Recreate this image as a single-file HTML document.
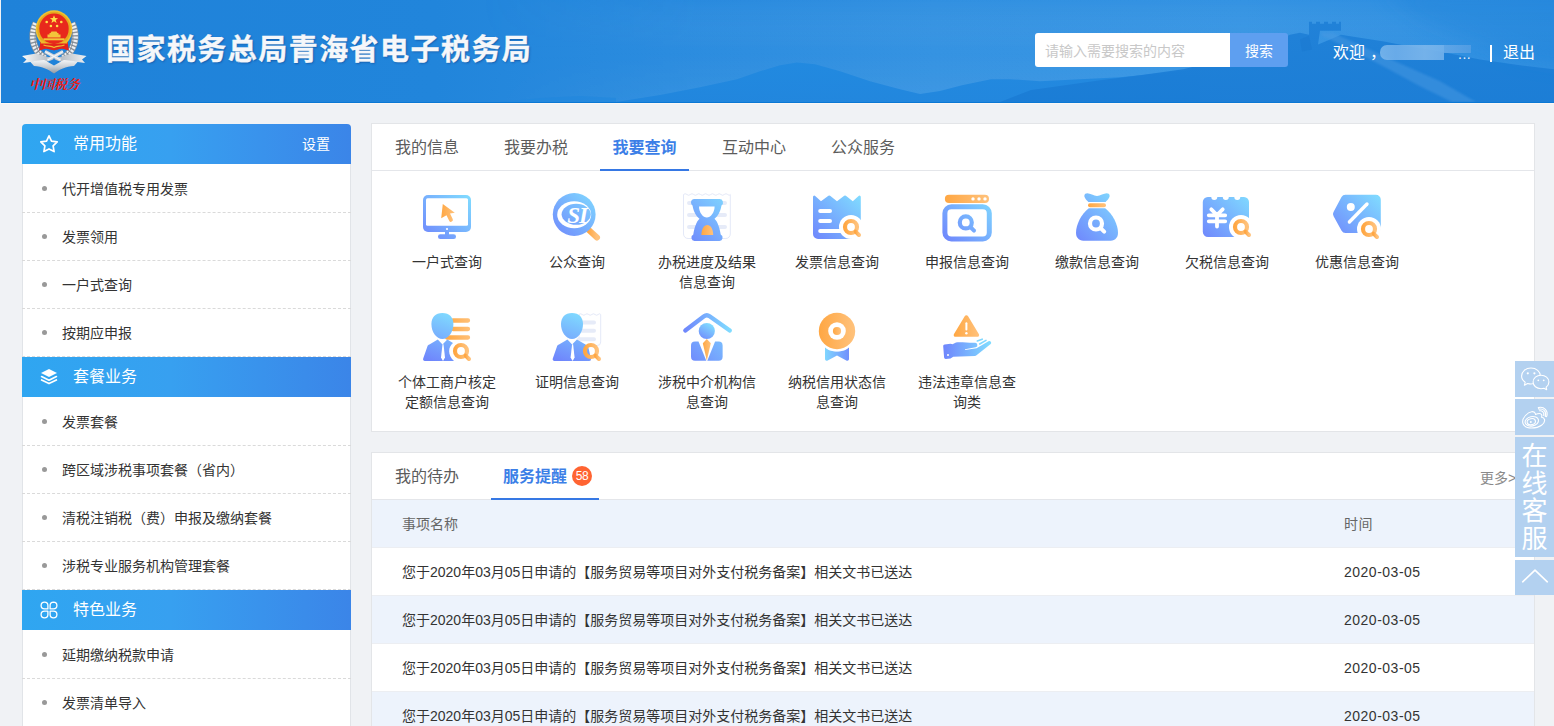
<!DOCTYPE html>
<html lang="zh-CN">
<head>
<meta charset="utf-8">
<title>国家税务总局青海省电子税务局</title>
<style>
*{box-sizing:border-box;margin:0;padding:0}
html,body{width:1554px;height:726px;overflow:hidden}
body{background:#f0f2f5;font-family:"Liberation Sans","Noto Sans CJK SC",sans-serif;color:#333;position:relative;font-size:14px}
ul{list-style:none}
/* header */
#hd{position:absolute;left:1px;top:0;width:1553px;height:103px;background:#1f82d9;overflow:hidden;border-bottom:1px solid #0b78d4}
#hd .bg{position:absolute;left:0;top:0;width:100%;height:100%}
#hdline{position:absolute;left:0;top:103px;width:1554px;height:1px;background:#fbf7f4}
#logo{position:absolute;left:18px;top:4px;width:74px;height:96px}
#title{position:absolute;left:106px;top:30px;height:40px;line-height:40px;font-size:29px;font-weight:bold;color:#f5f7fa;-webkit-text-stroke:.35px #f5f7fa;letter-spacing:1.45px;white-space:nowrap;text-shadow:1px 1px 2px rgba(0,40,110,.45)}
#search{position:absolute;left:1035px;top:33px;width:195px;height:34px;background:#fff;border-radius:3px 0 0 3px;color:#c8c8c8;font-size:14px;line-height:36px;padding-left:10px;overflow:hidden;white-space:nowrap}
#sbtn{position:absolute;left:1230px;top:33px;width:58px;height:34px;background:#5e9ff0;border-radius:0 3px 3px 0;color:#fff;font-size:14px;line-height:36px;overflow:hidden;text-align:center}
#welcome{position:absolute;left:1333px;top:41px;height:24px;line-height:24px;font-size:16px;color:#fff;white-space:nowrap}
#uname{position:absolute;left:1380px;top:45px;width:64px;height:15px;border-radius:7px 0 0 7px;background:linear-gradient(90deg,rgba(132,188,238,.8),rgba(112,175,234,.9) 25%,rgba(125,183,236,.9) 70%,rgba(120,180,236,.85));color:transparent;font-size:12px;overflow:hidden}
#uname2{position:absolute;left:1444px;top:45px;width:27px;height:8px;background:linear-gradient(90deg,rgba(110,172,232,.75),rgba(100,165,230,.6))}
#udots{position:absolute;left:1458px;top:42px;height:24px;line-height:24px;font-size:14px;letter-spacing:.5px;color:#e8f2fc;white-space:nowrap}
#sep{position:absolute;left:1490px;top:45px;width:2px;height:17px;background:#fff}
#logout{position:absolute;left:1503px;top:41px;height:24px;line-height:24px;font-size:16px;color:#fff;white-space:nowrap}
/* sidebar */
#side{position:absolute;left:22px;top:124px;width:329px;height:620px;background:#fff;box-shadow:inset 1px 0 #e1e4e8,inset -1px 0 #e1e4e8;border-radius:4px 4px 0 0;overflow:hidden}
.sh{position:relative;height:40px;background:linear-gradient(90deg,#2fa6f1 0%,#37a0f0 45%,#3b85e8 100%);color:#fff;font-size:16px;line-height:40px;padding-left:51px;white-space:nowrap}
.sh svg{position:absolute;left:16.500px;top:10px;width:20px;height:20px}
.sh .set{position:absolute;right:21px;top:0;font-size:14px}
#side ul{padding-top:1px}
#side li{position:relative;height:48px;line-height:49px;border-bottom:1px dashed #dadada;padding-left:40px;font-size:14px;color:#333;white-space:nowrap}
#side li:before{content:"";position:absolute;left:20px;top:21px;width:5px;height:5px;border-radius:50%;background:#999}
/* panels */
.panel{position:absolute;left:371px;width:1164px;background:#fff;border:1px solid #e3e5e8}
#p1{top:123px;height:309px}
#p2{top:452px;height:300px}
.tabs{position:relative;height:47px;border-bottom:1px solid #e4e6ea}
.tab{position:absolute;top:0;height:47px;line-height:47px;font-size:16px;color:#5c5c5c;white-space:nowrap;text-align:center}
.tab.on{color:#3c7fe7;font-weight:bold;border-bottom:2px solid #3678e4}
.ic{position:absolute;width:130px;text-align:center;font-size:14px;line-height:20px;color:#333}
.ic svg{display:block;margin:0 auto 7px;width:56px;height:56px}
.ic span{display:block;width:102px;margin:0 auto}
/* table */
.th{position:absolute;left:0;width:1162px;height:48px;line-height:49px;background:#edf3fc;font-size:14px;color:#666;border-bottom:1px solid #eceef2}
.tr{position:absolute;left:0;width:1162px;height:48px;line-height:49px;font-size:14px;color:#333;white-space:nowrap;border-bottom:1px solid #eceef2}
.tr.alt{background:#edf3fc}
.c1{position:absolute;left:30px;top:0}
.c2{position:absolute;left:972px;top:0;letter-spacing:.5px}
/* float */
.fl{position:absolute;left:1515px;width:39px;background:#b3d1f0;color:#fff;overflow:hidden}
.fl svg{display:block}
</style>
</head>
<body>
<div id="hd">
<svg class="bg" viewBox="1 0 1553 103" preserveAspectRatio="none">
<defs>
<linearGradient id="hg" gradientUnits="userSpaceOnUse" x1="0" y1="0" x2="1554" y2="0"><stop offset="0" stop-color="#1f82d9"/><stop offset=".28" stop-color="#2185db"/><stop offset=".43" stop-color="#2b8cdf"/><stop offset=".6" stop-color="#3593e2"/><stop offset=".8" stop-color="#3896e4"/><stop offset="1" stop-color="#2e8ee0"/></linearGradient>
<linearGradient id="hv" gradientUnits="userSpaceOnUse" x1="0" y1="0" x2="0" y2="103"><stop offset="0" stop-color="#0a6fd0" stop-opacity=".08"/><stop offset=".5" stop-color="#fff" stop-opacity="0"/><stop offset="1" stop-color="#fff" stop-opacity=".05"/></linearGradient>
<linearGradient id="hm" gradientUnits="userSpaceOnUse" x1="480" y1="0" x2="700" y2="0"><stop offset="0" stop-color="#fff" stop-opacity="0"/><stop offset="1" stop-color="#fff" stop-opacity="1"/></linearGradient>
<mask id="mk"><rect x="0" y="0" width="1554" height="103" fill="url(#hm)"/></mask>
<filter id="bl" x="-20%" y="-50%" width="140%" height="200%"><feGaussianBlur stdDeviation="9"/></filter><filter id="bl2"><feGaussianBlur stdDeviation="1.200"/></filter>
<linearGradient id="m1" gradientUnits="userSpaceOnUse" x1="0" y1="60" x2="0" y2="103"><stop offset="0" stop-color="#2089e0"/><stop offset="1" stop-color="#1f85dd"/></linearGradient>
<linearGradient id="m2" gradientUnits="userSpaceOnUse" x1="0" y1="20" x2="0" y2="103"><stop offset="0" stop-color="#1f80d7"/><stop offset="1" stop-color="#1a7cd5"/></linearGradient>
</defs>
<rect x="0" y="0" width="1554" height="103" fill="url(#hg)"/>
<rect x="0" y="0" width="1554" height="103" fill="url(#hv)" mask="url(#mk)"/>
<path d="M616 103 L660 96 L700 88 L737 80 L760 72 L780 66 L797 63 L815 65 L840 72 L870 82 L900 90 L920 95 L940 92 L962 86 L991 80 L1010 80 L1040 82 L1080 80 L1120 78 L1160 74 L1200 70 L1200 103 Z" fill="url(#m1)" opacity=".9"/>
<path d="M500 103 L540 99 L580 97 L616 99 L616 103 Z" fill="#2087de" opacity=".6"/>
<path d="M1000 103 L1031 91 L1065 86 L1100 81 L1140 76 L1183 70 L1215 62 L1250 52 L1275 42 L1290 35 L1300 33 L1309 35 L1309 22 L1312 22 L1312 24 L1316 24 L1316 22 L1320 22 L1320 24 L1324 24 L1324 22 L1328 22 L1328 24 L1332 24 L1332 22 L1336 22 L1336 24 L1339 24 L1339 22 L1341 22 L1341 31 L1320 31 L1318 45 L1330 40 L1341 35 L1360 38 L1384 42 L1410 47 L1440 52 L1480 60 L1520 66 L1554 70 L1554 103 Z" fill="url(#m2)" opacity=".92"/>
<path d="M1380 -10 L1574 -10 L1574 70 L1520 60 L1470 40 L1420 20 Z" fill="#1f82d9" opacity=".35" filter="url(#bl)"/>
<path d="M1322 33 L1332 33 L1352 42 L1400 64 L1440 82 L1476 103 L1452 103 L1420 87 L1385 68 L1345 47 L1322 36 Z" fill="#4a9ae2" opacity=".5" filter="url(#bl2)"/>
<path d="M1309 36 L1300 40 L1302 52 L1312 50 Z" fill="#1a78d0" opacity=".5"/>
</svg>
</div>
<div id="hdline"></div>
<svg id="logo" viewBox="18 4 74 96">
<defs>
<linearGradient id="sil" x1="0" y1="0" x2="0" y2="1"><stop offset="0" stop-color="#f4f6f8"/><stop offset=".5" stop-color="#c9ced4"/><stop offset="1" stop-color="#8f979f"/></linearGradient>
<linearGradient id="sil2" x1="0" y1="0" x2="1" y2="0"><stop offset="0" stop-color="#fafbfc"/><stop offset=".5" stop-color="#aab1b9"/><stop offset="1" stop-color="#eef0f2"/></linearGradient>
</defs>
<g fill="none" stroke-linecap="butt">
<path d="M45 58 C 34.500 52 29 38 36 23" stroke="#8b939b" stroke-width="7"/>
<path d="M63 58 C 73.500 52 79 38 72 23" stroke="#8b939b" stroke-width="7"/>
<path d="M45 58 C 34.500 52 29 38 36 23" stroke="#eef0f3" stroke-width="5.600" stroke-dasharray="2 1.400"/>
<path d="M63 58 C 73.500 52 79 38 72 23" stroke="#eef0f3" stroke-width="5.600" stroke-dasharray="2 1.400"/>
<path d="M42 55.500 C 36 50 33 40 36.500 29" stroke="#6f7780" stroke-width="1" opacity=".7"/>
<path d="M66 55.500 C 72 50 75 40 71.500 29" stroke="#6f7780" stroke-width="1" opacity=".7"/>
</g>
<path d="M22 56 L36 53.500 L50 57.500 L54 60 L58 57.500 L72 53.500 L86.500 56 L82 59.500 L85 63 L70 61 L58 65 L54 67 L50 65 L38 61 L23 63 L26.500 59.500 Z" fill="url(#sil2)"/>
<path d="M30 61.500 L44 60 L54 64.500 L64 60 L78 61.500 L74 66 C 66 66 59 70 54 73.500 C 49 70 42 66 34 66 Z" fill="url(#sil)"/>
<path d="M47 61.500 L54 59.500 L61 61.500 L54 65.500 Z" fill="#1f82d9"/>
<path d="M45 51.500 L60.500 60 M63 51.500 L47.500 60" stroke="#cfd4da" stroke-width="3.200" fill="none"/>
<path d="M45 51.500 L60.500 60 M63 51.500 L47.500 60" stroke="#f3f5f7" stroke-width="1.200" fill="none"/>
<path d="M40.300 41 H67.700 L68.600 50.300 L62 48.500 L54 50.300 L46 48.500 L39.400 50.300 Z" fill="#e3241b"/>
<ellipse cx="54" cy="29.300" rx="18.300" ry="19" fill="#f1c232"/>
<ellipse cx="54" cy="29.300" rx="16.800" ry="17.500" fill="#e6a91f"/>
<ellipse cx="54" cy="28.800" rx="14.700" ry="15.200" fill="#e8281c"/>
<path d="M41.500 40 C 46 43.500 51 42.500 54 44.500 C 57 42.500 62 43.500 66.500 40 L67.500 44.500 C 62 47 57 45.500 54 48 C 51 45.500 46 47 40.500 44.500 Z" fill="#efb92c"/>
<path d="M40.300 43.500 L67.700 43.500 L68.600 50.300 L62 48.200 L54 50.300 L46 48.200 L39.400 50.300 Z" fill="#e3241b"/>
<path d="M43.500 45 C 48 46.500 51 46 54 47.500 C 57 46 60 46.500 64.500 45" fill="none" stroke="#f0bd30" stroke-width="1.200"/>
<path d="M54 15.300 L55.100 18.100 L58.100 18.200 L55.700 20 L56.600 22.900 L54 21.200 L51.400 22.900 L52.300 20 L49.900 18.200 L52.900 18.100 Z" fill="#ffe14a"/>
<g fill="#ffe14a"><circle cx="46.700" cy="22" r="1.300"/><circle cx="50.900" cy="26" r="1.300"/><circle cx="57.100" cy="26" r="1.300"/><circle cx="61.300" cy="22" r="1.300"/></g>
<path d="M47.500 37.500 V34.500 H49.500 V33 H50.500 L51.500 31.500 H56.500 L57.500 33 H58.500 V34.500 H60.500 V37.500 Z" fill="#f3c53a"/>
<rect x="43.500" y="38.300" width="21" height="2" fill="#f3c53a"/>
<text x="54" y="89" text-anchor="middle" font-family="'Liberation Serif','Noto Serif CJK SC',serif" font-weight="700" font-style="italic" font-size="13" fill="#f2180e" letter-spacing="-0.600">中国税务</text>
</svg>
<div id="title">国家税务总局青海省电子税务局</div>
<div id="search">请输入需要搜索的内容</div>
<div id="sbtn">搜索</div>
<div id="welcome">欢迎<span style="margin-left:5px">，</span></div>
<div id="uname"></div><div id="uname2"></div>
<div id="udots">...</div>
<div id="sep"></div>
<div id="logout">退出</div>

<div id="side">
<div class="sh"><svg viewBox="0 0 20 20"><path d="M10 1.8l2.5 5.3 5.7.8-4.1 4 1 5.7-5.1-2.7-5.1 2.7 1-5.7-4.1-4 5.7-.8z" fill="none" stroke="#fff" stroke-width="1.7" stroke-linejoin="round"/></svg>常用功能<span class="set">设置</span></div>
<ul>
<li>代开增值税专用发票</li>
<li>发票领用</li>
<li>一户式查询</li>
<li>按期应申报</li>
</ul>
<div class="sh"><svg viewBox="0 0 20 20"><path d="M10 2l8 4-8 4-8-4z" fill="#fff"/><path d="M2.6 9.6L10 13.2l7.4-3.6M2.6 13L10 16.6 17.400 13" fill="none" stroke="#fff" stroke-width="1.7" stroke-linejoin="round" stroke-linecap="round"/></svg>套餐业务</div>
<ul>
<li>发票套餐</li>
<li>跨区域涉税事项套餐（省内）</li>
<li>清税注销税（费）申报及缴纳套餐</li>
<li>涉税专业服务机构管理套餐</li>
</ul>
<div class="sh"><svg viewBox="0 0 20 20"><g fill="none" stroke="#fff" stroke-width="1.300" stroke-linejoin="round"><path d="M5.500 2.100 A3.400 3.400 0 0 1 8.900 5.500 V8.900 H5.500 A3.400 3.400 0 0 1 5.500 2.100 Z"/><path d="M5.500 2.100 A3.400 3.400 0 0 1 8.900 5.500 V8.900 H5.500 A3.400 3.400 0 0 1 5.500 2.100 Z" transform="translate(20 0) scale(-1 1)"/><path d="M5.500 2.100 A3.400 3.400 0 0 1 8.900 5.500 V8.900 H5.500 A3.400 3.400 0 0 1 5.500 2.100 Z" transform="translate(0 20) scale(1 -1)"/><path d="M5.500 2.100 A3.400 3.400 0 0 1 8.900 5.500 V8.900 H5.500 A3.400 3.400 0 0 1 5.500 2.100 Z" transform="translate(20 20) scale(-1 -1)"/></g></svg>特色业务</div>
<ul>
<li>延期缴纳税款申请</li>
<li>发票清单导入</li>
</ul>
</div>

<div class="panel" id="p1">
<div class="tabs">
<div class="tab" style="left:23px;width:64px">我的信息</div>
<div class="tab" style="left:132px;width:64px">我要办税</div>
<div class="tab on" style="left:228px;width:89px">我要查询</div>
<div class="tab" style="left:350px;width:64px">互动中心</div>
<div class="tab" style="left:459px;width:64px">公众服务</div>
</div>
<svg width="0" height="0" style="position:absolute"><defs>
<linearGradient id="gb" gradientUnits="userSpaceOnUse" x1="6" y1="52" x2="50" y2="6"><stop offset="0" stop-color="#6f86fc"/><stop offset="1" stop-color="#80dbff"/></linearGradient>
<linearGradient id="go" gradientUnits="userSpaceOnUse" x1="0" y1="0" x2="56" y2="0"><stop offset="0" stop-color="#ffa640"/><stop offset="1" stop-color="#ffc988"/></linearGradient>
<linearGradient id="gom" gradientUnits="objectBoundingBox" x1="0" y1="0" x2="1" y2="0"><stop offset="0" stop-color="#ffa743"/><stop offset="1" stop-color="#ffc27c"/></linearGradient>
<linearGradient id="gh" gradientUnits="objectBoundingBox" x1="0" y1="1" x2="0.6" y2="0"><stop offset="0" stop-color="#6f86fc"/><stop offset="1" stop-color="#80dbff"/></linearGradient>
<linearGradient id="gr" gradientUnits="objectBoundingBox" x1="0" y1="0" x2="1" y2="0"><stop offset="0" stop-color="#80d6ff"/><stop offset="1" stop-color="#7190fc"/></linearGradient>
<linearGradient id="ghz" gradientUnits="userSpaceOnUse" x1="5" y1="0" x2="51" y2="0"><stop offset="0" stop-color="#6f86fc"/><stop offset="1" stop-color="#80dbff"/></linearGradient>
<linearGradient id="gv" gradientUnits="userSpaceOnUse" x1="12" y1="52" x2="30" y2="4"><stop offset="0" stop-color="#6f86fc"/><stop offset="1" stop-color="#80dbff"/></linearGradient>
<linearGradient id="gol" gradientUnits="userSpaceOnUse" x1="28" y1="0" x2="51" y2="0"><stop offset="0" stop-color="#ffa945"/><stop offset="1" stop-color="#ffc078"/></linearGradient>
</defs></svg>
<div class="ic" style="left:10px;top:65px"><svg viewBox="0 0 56 56">
<rect x="4" y="6" width="48" height="37" rx="5" fill="url(#gb)"/>
<rect x="7" y="9.200" width="42" height="27.600" rx="1.500" fill="#fff"/>
<rect x="26" y="42" width="4" height="5" fill="url(#gb)"/>
<rect x="19" y="45.300" width="18" height="4.700" rx="2.300" fill="url(#gb)"/>
<circle cx="28" cy="40" r="1.100" fill="#fff"/>
<path d="M23.800 15 L35.800 23.700 L31 24.400 L33.700 30 A1.900 1.900 0 0 1 30.200 31.700 L27.500 26.200 L22.200 29.200 Z" fill="url(#gom)"/>
</svg><span>一户式查询</span></div>
<div class="ic" style="left:140px;top:65px"><svg viewBox="0 0 56 56">
<path d="M39.400 40.600 L48 48.500" stroke="url(#gom)" stroke-width="6" stroke-linecap="round" fill="none"/>
<circle cx="25.200" cy="25.500" r="21.400" fill="url(#gb)"/>
<ellipse cx="25.200" cy="25.700" rx="17" ry="13.500" fill="#fff"/>
<ellipse cx="27.200" cy="25.300" rx="14.600" ry="10.500" fill="url(#gb)"/>
<text x="28" y="33.600" text-anchor="middle" font-family="'Liberation Serif',serif" font-weight="bold" font-style="italic" font-size="23" fill="#fff" letter-spacing="-1">SI</text>
</svg><span>公众查询</span></div>
<div class="ic" style="left:270px;top:65px"><svg viewBox="0 0 56 56">
<path d="M4.500 5.500 q1.700 -1.600 3.400 0 t3.400 0 t3.400 0 t3.400 0 t3.400 0 t3.400 0 t3.400 0 t3.400 0 t3.400 0 t3.400 0 t3.400 0 t3.400 0 t3.400 0 t2.600 0 V45 a4.500 4.500 0 0 1 -4.500 4.500 H9 a4.500 4.500 0 0 1 -4.500 -4.500 Z" fill="#fff" stroke="#e4e9f8" stroke-width="1"/>
<g stroke="#e6ebf8" stroke-width="4" stroke-linecap="round"><path d="M10 14 H46 M10 26 H46 M10 38 H46"/></g>
<path d="M12 13.500 a3.500 3.500 0 0 1 3.500 -3.500 h25 a3.500 3.500 0 0 1 2 6.400 C 41 24 38.500 27 35.500 29.700 C 38.500 32.500 40.500 38 41.700 45.400 a3.500 3.500 0 0 1 -1.200 6.600 h-25 a3.500 3.500 0 0 1 -1.200 -6.600 C 15.500 38 17.500 32.500 20.500 29.700 C 17.500 27 15 24 13.500 16.400 A3.500 3.500 0 0 1 12 13.500 Z" fill="url(#gb)"/>
<path d="M20 17.400 H35.600 C 35.600 23.500 31.500 28.400 27.800 28.400 C 24 28.400 20 23.500 20 17.400 Z" fill="#fff"/>
<path d="M22.400 46 C 22.400 40 25 35.900 28.300 35.900 C 31.600 35.900 34.200 40 34.200 46 Z" fill="url(#gom)"/>
</svg><span>办税进度及结果信息查询</span></div>
<div class="ic" style="left:400px;top:65px"><svg viewBox="0 0 56 56">
<path d="M4 8 a1.300 1.300 0 0 1 2.200 -1 L12 12.200 L19.400 6.800 a1.500 1.500 0 0 1 1.700 0 L28 12.200 L35.200 6.800 a1.500 1.500 0 0 1 1.700 0 L43.800 12.200 L49.600 7 A1.300 1.300 0 0 1 51.800 8 V50 H9 a5 5 0 0 1 -5 -5 Z" fill="url(#gb)"/>
<g stroke="#fff" stroke-width="4" stroke-linecap="round"><path d="M11.200 22 H21 M11.200 31.900 H21 M11.200 42 H34"/></g>
<circle cx="42" cy="38" r="12" fill="#fff"/>
<rect x="43" y="44" width="13" height="8" fill="#fff"/>
<circle cx="42" cy="38" r="6" fill="none" stroke="url(#gom)" stroke-width="4.200"/>
<path d="M46.600 42.600 L50 46" stroke="url(#gom)" stroke-width="4" stroke-linecap="round"/>
</svg><span>发票信息查询</span></div>
<div class="ic" style="left:530px;top:65px"><svg viewBox="0 0 56 56">
<rect x="5.900" y="5.700" width="44.100" height="8.300" rx="4.100" fill="url(#gom)"/>
<circle cx="34" cy="9.900" r="1.700" fill="#fff"/><circle cx="40" cy="9.900" r="1.700" fill="#fff"/><circle cx="46" cy="9.900" r="1.700" fill="#fff"/>
<rect x="5.900" y="17.800" width="44.400" height="32.200" rx="6.500" fill="#fff" stroke="url(#gb)" stroke-width="5"/>
<circle cx="26.800" cy="33.400" r="6" fill="none" stroke="url(#gb)" stroke-width="4.200"/>
<path d="M31.400 38 L35 41.600" stroke="url(#gb)" stroke-width="4" stroke-linecap="round"/>
</svg><span>申报信息查询</span></div>
<div class="ic" style="left:660px;top:65px"><svg viewBox="0 0 56 56">
<path d="M16.300 4.800 C 19 2.600 24 6.600 28 7 C 32 6.600 37 2.600 39.700 4.800 C 42.500 7.600 38.500 10.800 36.700 13 H19.300 C 17.500 10.800 13.500 7.600 16.300 4.800 Z" fill="url(#gb)"/>
<rect x="19" y="14.200" width="18" height="4" rx="2" fill="url(#gom)"/>
<path d="M19.800 19.200 H36.200 C 44 25.500 49 35.500 49 44 C 49 50 44.500 51.800 40 51.800 H16 C 11.500 51.800 7 50 7 44 C 7 35.500 12 25.500 19.800 19.200 Z" fill="url(#gb)"/>
<circle cx="27" cy="34.500" r="6" fill="none" stroke="#fff" stroke-width="4.200"/>
<path d="M31.600 39.100 L35.200 42.700" stroke="#fff" stroke-width="4" stroke-linecap="round"/>
</svg><span>缴款信息查询</span></div>
<div class="ic" style="left:790px;top:65px"><svg viewBox="0 0 56 56">
<path d="M3.800 13 a5 5 0 0 1 5 -5.100 h3.500 a3 3 0 0 0 6 0 h5.500 a3 3 0 0 0 6 0 h5.500 a3 3 0 0 0 6 0 h3.700 a5 5 0 0 1 5 5.100 V48 H9 a5.200 5.200 0 0 1 -5.200 -5.200 Z" fill="url(#gb)"/>
<g stroke="#fff" stroke-width="3.800" stroke-linecap="round" stroke-linejoin="round" fill="none"><path d="M12.300 20.300 L18 26 L23.700 20.300 M9.800 26.300 H26.200 M9.800 32.300 H26.200 M18 26.500 V37.500"/></g>
<circle cx="42" cy="38" r="12" fill="#fff"/>
<rect x="36" y="44" width="20" height="8" fill="#fff"/>
<circle cx="42" cy="38" r="6" fill="none" stroke="url(#gom)" stroke-width="4.200"/>
<path d="M46.600 42.600 L50 46" stroke="url(#gom)" stroke-width="4" stroke-linecap="round"/>
</svg><span>欠税信息查询</span></div>
<div class="ic" style="left:920px;top:65px"><svg viewBox="0 0 56 56">
<path d="M16.500 5.700 H46.800 a5 5 0 0 1 5 5 V39 a5 5 0 0 1 -5 5 H16.500 a4.500 4.500 0 0 1 -3.900 -2.200 L4.600 27.300 a4.500 4.500 0 0 1 -0.100 -4.400 L12.500 8 A4.500 4.500 0 0 1 16.500 5.700 Z" fill="url(#gb)"/>
<circle cx="21.800" cy="18" r="4" fill="#fff"/>
<path d="M38 15 L20.400 33" stroke="#fff" stroke-width="3.400" stroke-linecap="round"/>
<circle cx="40" cy="40" r="12" fill="#fff"/>
<rect x="28" y="44.200" width="28" height="10" fill="#fff"/>
<circle cx="40" cy="40" r="6" fill="none" stroke="url(#gom)" stroke-width="4.200"/>
<path d="M44.600 44.600 L48 48" stroke="url(#gom)" stroke-width="4" stroke-linecap="round"/>
</svg><span>优惠信息查询</span></div>
<div class="ic" style="left:10px;top:185px"><svg viewBox="0 0 56 56">
<g stroke="url(#gol)" stroke-width="4.300" stroke-linecap="round"><path d="M34 11.500 H49 M34 20 H49 M28 28.500 H49"/></g>
<path d="M23.400 4 C 30.500 4 34.400 8.500 34.400 15 C 34.400 23 29.500 30 23.400 30 C 17.300 30 12.400 23 12.400 15 C 12.400 8.500 16.300 4 23.400 4 Z" fill="url(#gv)"/>
<path d="M4.200 49.500 L8.300 37.700 C 8.700 36.600 9.400 36 10.400 35.600 L18.800 30.400 L23.500 35.600 L28.300 30.400 L34 34 C 29 38 28.500 46 35 52 H5.900 A1.800 1.800 0 0 1 4.200 49.500 Z" fill="url(#gv)"/>
<path d="M23.500 35.200 L22 48.500 L24 52 L26 48.500 L24.500 35.200 Z" fill="#fff"/>
<circle cx="42" cy="42" r="6" fill="none" stroke="url(#gom)" stroke-width="4.200"/>
<path d="M46.600 46.600 L50 50" stroke="url(#gom)" stroke-width="4" stroke-linecap="round"/>
</svg><span>个体工商户核定定额信息查询</span></div>
<div class="ic" style="left:140px;top:185px"><svg viewBox="0 0 56 56">
<path d="M30 5.500 q1.600 -1.500 3.200 0 t3.200 0 t3.200 0 t3.200 0 t3.200 0 t3.200 0 t2.500 0 V33 a3.500 3.500 0 0 1 -3.500 3.500 H30 Z" fill="#fff" stroke="#e4e9f8" stroke-width="1"/>
<g stroke="#e6ebf8" stroke-width="4" stroke-linecap="round"><path d="M33 13.500 H45 M33 21.800 H45 M30 30.300 H45"/></g>
<path d="M23 4 C 30.100 4 34 8.500 34 15 C 34 23 29.100 30 23 30 C 16.900 30 12 23 12 15 C 12 8.500 15.900 4 23 4 Z" fill="url(#gv)"/>
<path d="M3.800 49.500 L7.900 37.700 C 8.300 36.600 9 36 10 35.600 L18.400 30.400 L23.100 35.600 L27.900 30.400 L36.500 35.500 C 38.500 36.500 39 37.500 39.500 39 L42 50 A1.800 1.800 0 0 1 40.300 52 H5.500 A1.800 1.800 0 0 1 3.800 49.500 Z" fill="url(#gv)"/>
<path d="M23.100 35.200 L21.600 48.500 L23.600 52 L25.600 48.500 L24.100 35.200 Z" fill="#fff"/>
<circle cx="42" cy="42" r="6" fill="none" stroke="url(#gom)" stroke-width="4.200"/>
<path d="M46.600 46.600 L50 50" stroke="url(#gom)" stroke-width="4" stroke-linecap="round"/>
</svg><span>证明信息查询</span></div>
<div class="ic" style="left:270px;top:185px"><svg viewBox="0 0 56 56">
<path d="M6.300 21.500 L25 7.300 a4.500 4.500 0 0 1 5.600 0 L50.800 21.500" fill="none" stroke="url(#ghz)" stroke-width="4.300" stroke-linecap="round" stroke-linejoin="round"/>
<circle cx="27.800" cy="22" r="8.100" fill="url(#gh)"/>
<path d="M12 36.500 a4 4 0 0 1 4 -4 H19.500 L27.300 51.800 H16 a4 4 0 0 1 -4 -4 Z" fill="url(#gb)"/>
<path d="M43.600 36.500 a4 4 0 0 0 -4 -4 H36.100 L28.300 51.800 H39.600 a4 4 0 0 0 4 -4 Z" fill="url(#gb)"/>
<path d="M27.800 30 L31.800 34.300 L27.800 51.500 L23.800 34.300 Z" fill="url(#gom)"/>
</svg><span>涉税中介机构信息查询</span></div>
<div class="ic" style="left:400px;top:185px"><svg viewBox="0 0 56 56">
<path d="M16 38 C 20 44 36 44 40 38 V50 a1.800 1.800 0 0 1 -2.700 1.500 L28 46.500 L18.700 51.500 A1.800 1.800 0 0 1 16 50 Z" fill="url(#gr)"/>
<circle cx="28" cy="22" r="20.300" fill="#fff"/>
<circle cx="28" cy="22" r="18.200" fill="url(#gom)"/>
<circle cx="28" cy="22" r="8.800" fill="#fff"/>
<circle cx="28" cy="22" r="4.100" fill="url(#gom)"/>
</svg><span>纳税信用状态信息查询</span></div>
<div class="ic" style="left:530px;top:185px"><svg viewBox="0 0 56 56">
<path d="M25.700 7.200 a2 2 0 0 1 3.400 0 L39.800 25 a1.800 1.800 0 0 1 -1.600 2.800 H16.600 a1.800 1.800 0 0 1 -1.600 -2.800 Z" fill="url(#gom)"/>
<rect x="26.400" y="13.200" width="2" height="8.200" rx="1" fill="#fff"/><circle cx="27.400" cy="24.300" r="1.200" fill="#fff"/>
<path d="M4.200 37.200 a1.600 1.600 0 0 1 1.400 -1.800 L11.500 34.700 L13.500 35.300 L17 33.500 C 22 33 30 34 35.800 33.800 a2.300 2.300 0 0 1 0.900 4.500 L26 40.300 L26.200 41 L37.600 39.200 L49.500 32.300 a1.800 1.800 0 0 1 2.200 2.800 L37.500 46.300 a3 3 0 0 1 -1.600 0.600 L14.200 47.800 L11.500 49.600 L6.800 50 A1.600 1.600 0 0 1 5.100 48.600 Z" fill="url(#ghz)"/>
<circle cx="9" cy="46" r="1" fill="#fff"/>
<path d="M38.300 32 L43.200 30.200 M40.700 35 L47 31.400" stroke="#80d8ff" stroke-width="1.600" stroke-linecap="round"/>
</svg><span>违法违章信息查询类</span></div>

</div>

<div class="panel" id="p2">
<div class="tabs">
<div class="tab" style="left:23px;width:64px">我的待办</div>
<div class="tab on" style="left:119px;width:108px;text-align:left;padding-left:12px">服务提醒</div>
<div style="position:absolute;left:200px;top:13px;width:20px;height:20px;border-radius:50%;background:#ff6432;color:#fff;font-size:12px;line-height:20px;text-align:center;letter-spacing:-.5px">58</div>
<div style="position:absolute;left:1108px;top:15px;font-size:14px;color:#8a8a8a;line-height:20px;white-space:nowrap">更多&gt;&gt;</div>
</div>
<div class="th" style="top:47px"><span class="c1">事项名称</span><span class="c2">时间</span></div>
<div class="tr" style="top:95px"><span class="c1">您于2020年03月05日申请的【服务贸易等项目对外支付税务备案】相关文书已送达</span><span class="c2">2020-03-05</span></div>
<div class="tr alt" style="top:143px"><span class="c1">您于2020年03月05日申请的【服务贸易等项目对外支付税务备案】相关文书已送达</span><span class="c2">2020-03-05</span></div>
<div class="tr" style="top:191px"><span class="c1">您于2020年03月05日申请的【服务贸易等项目对外支付税务备案】相关文书已送达</span><span class="c2">2020-03-05</span></div>
<div class="tr alt" style="top:239px"><span class="c1">您于2020年03月05日申请的【服务贸易等项目对外支付税务备案】相关文书已送达</span><span class="c2">2020-03-05</span></div>
</div>

<div class="fl" style="top:361px;height:36px"><svg viewBox="0 0 39 36" width="39" height="36"><g fill="#b3d1f0" stroke="#fff" stroke-width="1.100" stroke-linejoin="round">
<path d="M16 7 C 21.300 7 25.400 10.600 25.400 15 C 25.400 19.400 21.300 23 16 23 C 14.800 23 13.700 22.800 12.600 22.500 L 9.400 24.200 L 10.200 21.200 C 8 19.700 6.600 17.500 6.600 15 C 6.600 10.600 10.700 7 16 7 Z"/>
<path d="M26 14.200 C 30.400 14.200 33.900 17.200 33.900 21 C 33.900 23.100 32.800 24.900 31.100 26.200 L 31.700 28.700 L 28.900 27.300 C 28 27.600 27 27.700 26 27.700 C 21.600 27.700 18.100 24.700 18.100 21 C 18.100 17.200 21.600 14.200 26 14.200 Z"/></g>
<g fill="#fff"><circle cx="12.800" cy="12.300" r="1.100"/><circle cx="19.400" cy="12.300" r="1.100"/><circle cx="23.300" cy="19.300" r=".9"/><circle cx="28.700" cy="19.300" r=".9"/></g></svg></div>
<div class="fl" style="top:399px;height:36px"><svg viewBox="0 0 39 36" width="39" height="36"><g fill="none" stroke="#fff" stroke-width="1.100" stroke-linecap="round" stroke-linejoin="round">
<path d="M20.500 14.800 C 19.500 11.500 14.500 12 10.500 16.500 C 5.500 22 7 29 16.500 29 C 25 29 30.500 24.500 29.500 20.500 C 29 18.700 27.500 18.300 26.500 18.200 C 27.200 16.500 26.800 14.500 24.500 14.500 C 23 14.500 21.500 15 20.500 15.500 Z"/>
<ellipse cx="16.800" cy="22.300" rx="6.800" ry="4.700" transform="rotate(-12 16.800 22.300)"/>
<ellipse cx="16.300" cy="22.700" rx="4.200" ry="3" transform="rotate(-12 16.300 22.700)"/>
<path d="M24.500 11.800 C 27.200 11.300 29.500 13.800 28.700 16.500"/>
<path d="M23.300 8.600 C 29 7 33.700 12 31.600 17.600 L 30.200 17.200 C 31.800 12.800 28.300 9 24 10.200 Z"/>
</g><circle cx="15.800" cy="23" r="1" fill="#fff"/></svg></div>
<div class="fl" style="top:437px;height:120px;font-size:26px;font-weight:400;line-height:27.700px;text-align:center;padding-top:6px">在<br>线<br>客<br>服</div>
<div class="fl" style="top:560px;height:35px"><svg viewBox="0 0 39 35" width="39" height="35"><path d="M7.700 21.800 L20 10.200 L32.300 21.800" fill="none" stroke="#fff" stroke-width="1.600" stroke-linecap="round" stroke-linejoin="round"/></svg></div>
</body>
</html>
